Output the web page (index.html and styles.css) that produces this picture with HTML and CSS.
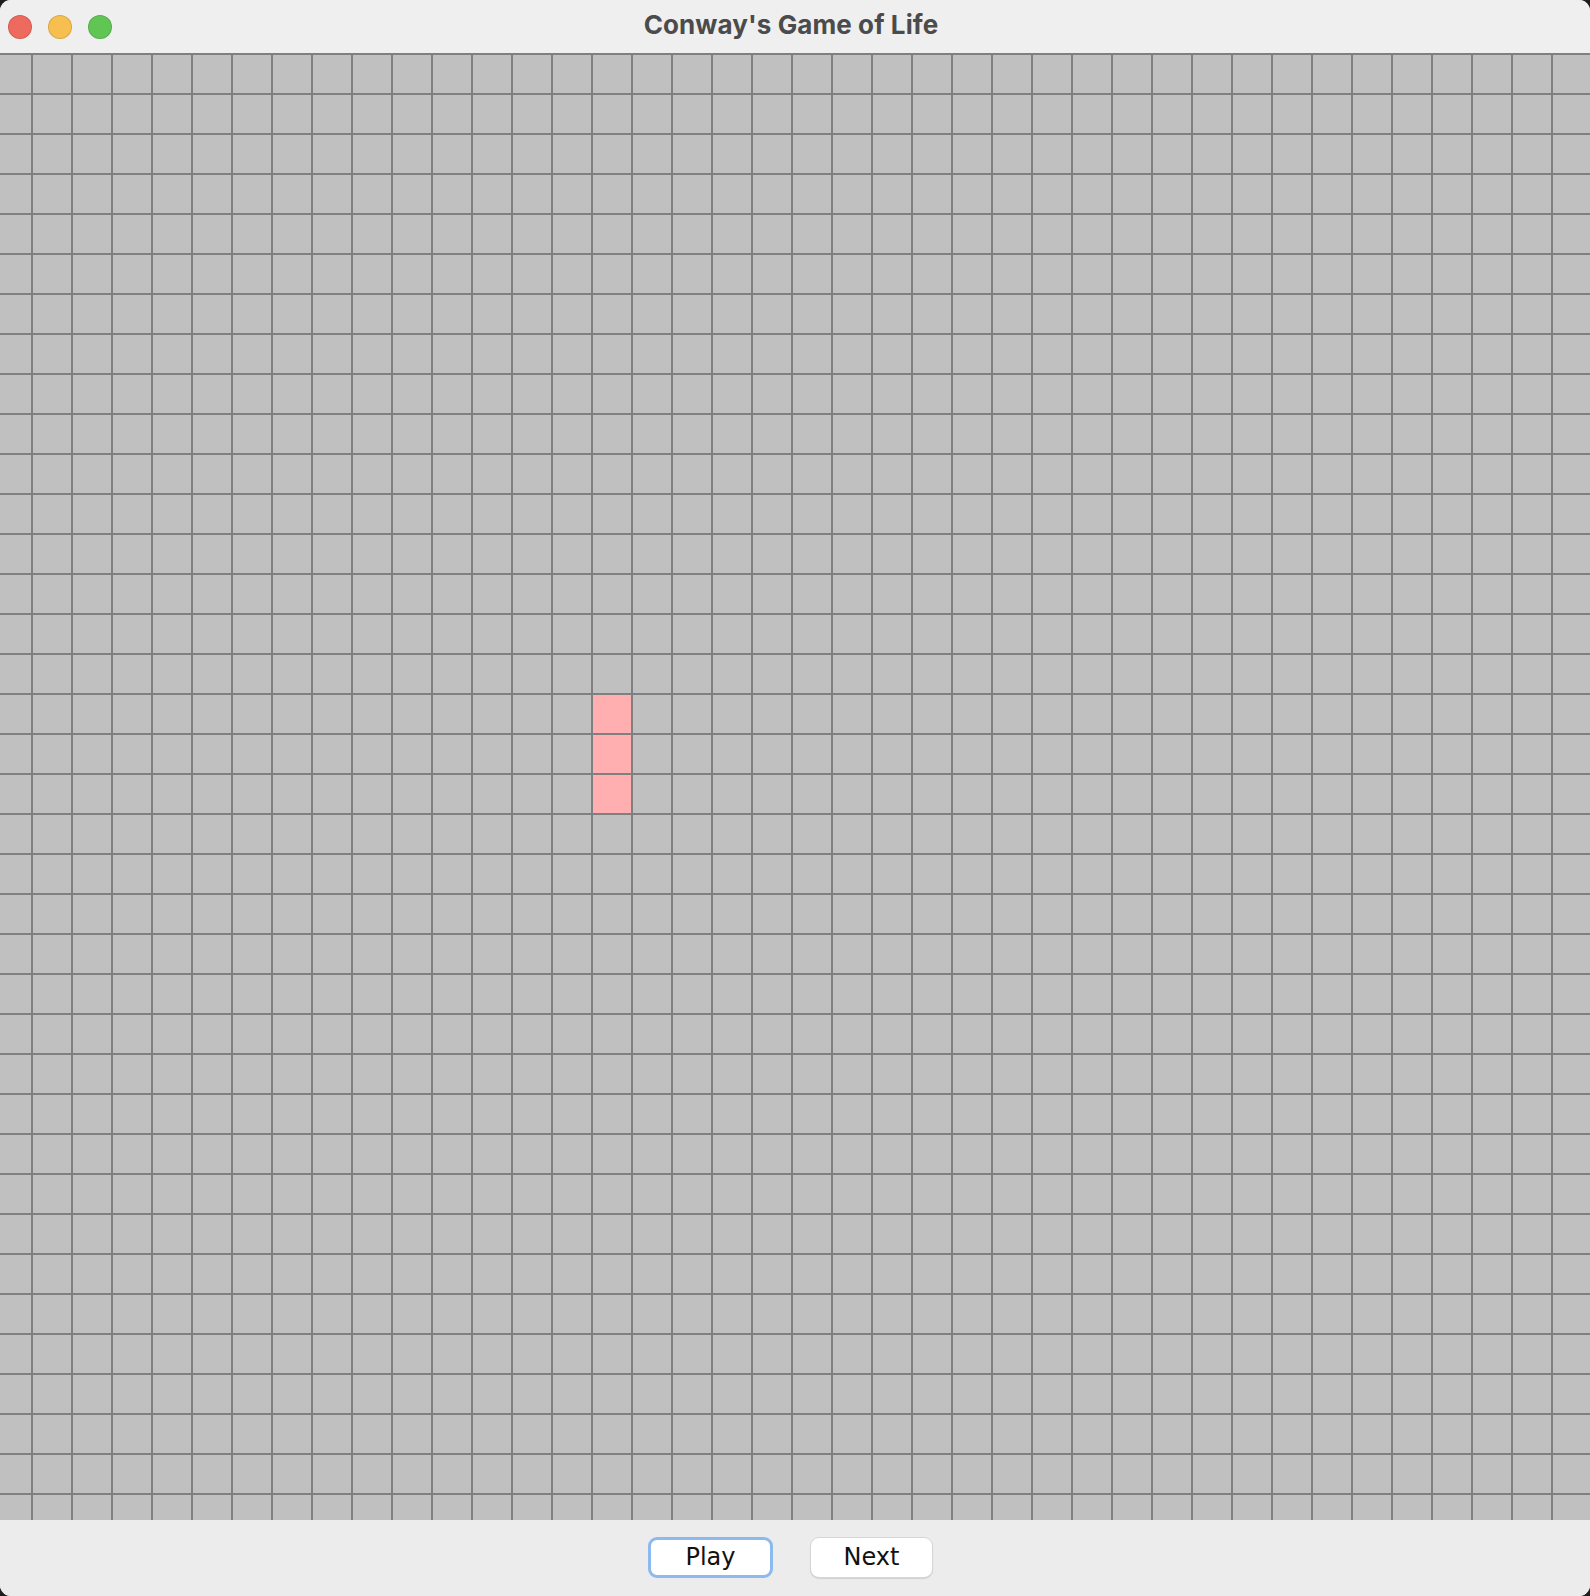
FILE: index.html
```html
<!DOCTYPE html>
<html>
<head>
<meta charset="utf-8">
<title>Conway's Game of Life</title>
<link rel="stylesheet" href="styles.css">
</head>
<body>
<div class="window">
  <header class="titlebar">
    <div class="lights">
      <span class="light red"></span>
      <span class="light yellow"></span>
      <span class="light green"></span>
    </div>
    <div class="title">Conway's Game of Life</div>
    <div class="spacer"></div>
  </header>
  <main class="board">
    <div class="cell alive r17"></div>
    <div class="cell alive r18"></div>
    <div class="cell alive r19"></div>
  </main>
  <footer class="controls">
    <button class="btn focused">Play</button>
    <button class="btn">Next</button>
  </footer>
</div>
</body>
</html>
```
FILE: styles.css
```css
html, body {
  margin: 0;
  padding: 0;
  background: #1e1e1e;
}
body {
  width: 1590px;
  height: 1596px;
  overflow: hidden;
}
.window {
  width: 1590px;
  height: 1596px;
  border-radius: 11px;
  overflow: hidden;
  display: flex;
  flex-direction: column;
  background: #ececec;
}
.titlebar {
  height: 53px;
  flex: none;
  background: #efefef;
  display: grid;
  grid-template-columns: 1fr auto 1fr;
  align-items: center;
}
.lights {
  display: flex;
  gap: 16px;
  padding-left: 8px;
  padding-top: 1px;
}
.light {
  width: 24px;
  height: 24px;
  border-radius: 50%;
  box-sizing: border-box;
  border: 1px solid rgba(0, 0, 0, 0.12);
}
.red { background: #ee6a5f; }
.yellow { background: #f6bf4f; }
.green { background: #61c554; }
.title {
  font-family: Inter, "Noto Sans", sans-serif;
  font-weight: 700;
  font-size: 26px;
  color: #4b4b4b;
  padding-right: 8px;
  padding-bottom: 4px;
  letter-spacing: 0.1px;
}
.board {
  height: 1467px;
  flex: none;
  box-sizing: border-box;
  padding: 2px 0 0 33px;
  background-color: #c0c0c0;
  background-image:
    linear-gradient(to right, #808080 2px, transparent 2px),
    linear-gradient(to bottom, #808080 2px, transparent 2px);
  background-size: 40px 40px;
  background-position: 31px 0;
  display: grid;
  grid-template-columns: repeat(39, 40px);
  grid-auto-rows: 40px;
  align-content: start;
}
.cell {
  width: 38px;
  height: 38px;
}
.alive {
  background: #ffafaf;
  grid-column: 15;
}
.r17 { grid-row: 17; }
.r18 { grid-row: 18; }
.r19 { grid-row: 19; }
.controls {
  flex: 1;
  display: flex;
  justify-content: center;
  align-items: flex-start;
  gap: 37px;
  padding-top: 17px;
  padding-right: 9px;
  background: #ececec;
}
.btn {
  width: 123px;
  height: 41px;
  box-sizing: border-box;
  border-radius: 9px;
  border: 1px solid #d6d6d6;
  background: #ffffff;
  box-shadow: 0 1px 1px rgba(0, 0, 0, 0.12);
  font-family: "DejaVu Sans", Verdana, sans-serif;
  font-size: 24px;
  color: #111111;
  padding: 0 0 2px 0;
  margin: 0;
}
.btn.focused {
  width: 125px;
  border: 3px solid #8cb9ef;
  box-shadow: none;
}
```
